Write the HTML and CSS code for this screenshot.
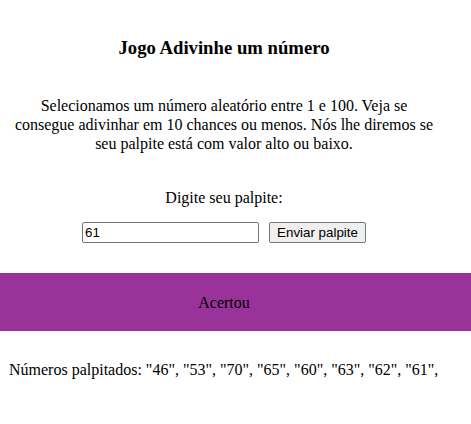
FILE: index.html
```html
<!DOCTYPE html>
<html lang="pt">
<head>
<meta charset="utf-8">
<title>Jogo Adivinhe um número</title>
<link rel="stylesheet" href="styles.css">
</head>
<body>
<div class="page">
  <h1 class="title">Jogo Adivinhe um número</h1>
  <p class="intro">Selecionamos um número aleatório entre 1 e 100. Veja se consegue adivinhar em 10 chances ou menos. Nós lhe diremos se seu palpite está com valor alto ou baixo.</p>
  <div class="form">
    <label class="label" for="guess">Digite seu palpite:</label>
    <div class="row">
      <input class="field" id="guess" type="text" value="61">
      <button class="submit" type="button">Enviar palpite</button>
    </div>
  </div>
  <div class="result"><span class="result-text">Acertou</span></div>
  <p class="guesses">Números palpitados: "46", "53", "70", "65", "60", "63", "62", "61",</p>
</div>
</body>
</html>
```
FILE: styles.css
```css
html, body {
  margin: 0;
  padding: 0;
  background: #fff;
}
body {
  font-family: "Liberation Serif", "Times New Roman", serif;
  font-size: 16px;
  color: #000;
  overflow: hidden;
}
.page {
  width: 448px;
  box-sizing: border-box;
  text-align: center;
}
.title {
  margin: 37px 0 0;
  font-size: 18.72px;
  line-height: 22px;
  font-weight: bold;
}
.intro {
  margin: 37px 0 0;
  padding: 0 10px;
  line-height: 19px;
}
.form {
  margin-top: 35px;
  display: flex;
  flex-direction: column;
  align-items: center;
}
.label {
  line-height: 19px;
}
.row {
  margin-top: 15px;
  display: flex;
  justify-content: center;
  gap: 10px;
}
.field {
  box-sizing: border-box;
  width: 177px;
  height: 21px;
  margin: 0;
  padding: 1px 2px;
  border: 1px solid #767676;
  border-radius: 2px;
  font-family: "Liberation Sans", Arial, sans-serif;
  font-size: 13.33px;
  color: #000;
  background: #fff;
}
.submit {
  box-sizing: border-box;
  width: 97px;
  height: 21px;
  margin: 0;
  padding: 1px 6px;
  border: 1px solid #767676;
  border-radius: 2px;
  background: #efefef;
  font-family: "Liberation Sans", Arial, sans-serif;
  font-size: 13.33px;
  color: #000;
}
.result {
  width: 471px;
  margin-top: 30px;
  height: 58px;
  background: #993399;
  display: flex;
  align-items: center;
}
.result-text {
  width: 448px;
  text-align: center;
  line-height: 19px;
}
.guesses {
  margin: 29px 0 0;
  padding-left: 9px;
  text-align: left;
  line-height: 19px;
  white-space: nowrap;
}
```
